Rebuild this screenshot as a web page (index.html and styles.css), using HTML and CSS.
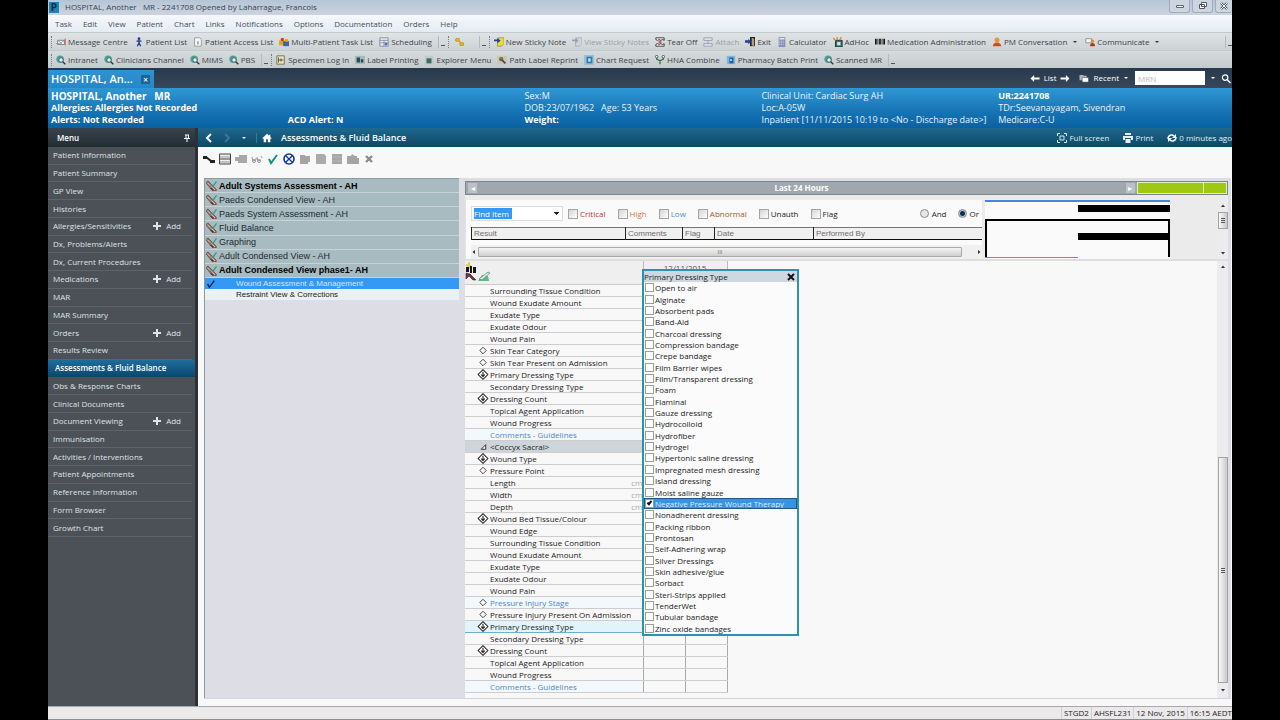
FILE: index.html
```html
<!DOCTYPE html>
<html lang="en">
<head>
<meta charset="utf-8">
<title>HOSPITAL, Another MR - 2241708</title>
<link rel="stylesheet" href="styles.css">
</head>
<body>
<svg class="sprite" aria-hidden="true">
  <symbol id="globe" viewBox="0 0 12 12"><circle cx="5" cy="5" r="4.5" fill="#4a9fae"/><path d="M2 3l3-2 1 2-2 3zM6 6l3-2v3z" fill="#4fa34e"/><circle cx="6" cy="6" r="2.6" fill="#e6f2f6" stroke="#40606c"/><path d="M8 8l3.2 3.2" stroke="#333" stroke-width="1.6"/></symbol>
  <symbol id="letter" viewBox="0 0 12 12"><path d="M2 4h8v5H2z" fill="#fff" stroke="#777"/><path d="M0 8h7M2 4l4 3 4-3" stroke="#888" fill="none"/><path d="M11 2v8" stroke="#c33"/></symbol>
  <symbol id="person" viewBox="0 0 12 12"><circle cx="6" cy="2" r="1.6" fill="#223a8c"/><path d="M6 3v4M3 5h6M6 7l-2 4M6 7l2 4" stroke="#223a8c" stroke-width="1.5"/></symbol>
  <symbol id="page" viewBox="0 0 12 12"><path d="M2 1h6l2 2v8H2z" fill="#f8f8fa" stroke="#8b8f96"/><path d="M6 5v4" stroke="#446" /></symbol>
  <symbol id="folk" viewBox="0 0 12 12"><path d="M0 4h7v6H0z" fill="#e8a020"/><circle cx="4" cy="3" r="2" fill="#d33a24"/><path d="M5 5h7v6H5z" fill="#3a66a8"/><circle cx="9" cy="4" r="2" fill="#e8a020"/></symbol>
  <symbol id="sched" viewBox="0 0 12 12"><path d="M1 1h10v10H1z" fill="#e8ecf4" stroke="#7a879c"/><path d="M1 4h10M1 7h10M6 4v7" stroke="#7a879c"/><path d="M7 7h3v3H7z" fill="#4a70b8"/></symbol>
  <symbol id="note" viewBox="0 0 12 12"><path d="M5 1h7v7l-3 3H4z" fill="#eedb3c" stroke="#8a7a20" stroke-width=".7"/><path d="M0 3h4V1l4 3.500-4 3V5H0z" fill="#233fa0"/></symbol>
  <symbol id="notegray" viewBox="0 0 12 12"><path d="M5 1h7v7l-3 3H4z" fill="#d0d3d6" stroke="#989da2" stroke-width=".7"/><path d="M0 3h4V1l4 3.500-4 3V5H0z" fill="#8fa3ba"/></symbol>
  <symbol id="tear" viewBox="0 0 12 12"><path d="M1 1h10v3L9 3 7 4 5 3 3 4 1 3zM1 11h10V8L9 9 7 8 5 9 3 8 1 9z" fill="#fff" stroke="#222"/><path d="M6 4v4M4 6h4" stroke="#c22"/></symbol>
  <symbol id="attach" viewBox="0 0 12 12"><path d="M1 1h10v3H1zM1 11h10V8H1zM6 4v4" fill="#e8eaf0" stroke="#8a94b0"/></symbol>
  <symbol id="exit" viewBox="0 0 12 12"><path d="M6 0h6v11H6z" fill="#222"/><path d="M8 1l3 1v9l-3-1z" fill="#b5a270"/><path d="M0 4h4V2l3 3.500L4 9V7H0z" fill="#253fa4"/></symbol>
  <symbol id="calc" viewBox="0 0 12 12"><path d="M2 0h8v12H2z" fill="#8790b4"/><path d="M3 1h6v2H3z" fill="#e0e8f0"/><path d="M3 5h6M3 7h6M3 9h6" stroke="#dfe2f0" stroke-dasharray="1 1"/></symbol>
  <symbol id="adhoc" viewBox="0 0 12 12"><path d="M3 4h8v8H3z" fill="#2f6f78" stroke="#222"/><path d="M5 6h4v4H5z" fill="#d8e8d8"/><path d="M0 1l3 3M5 0v4M10 0L8 4" stroke="#c8901c" stroke-width="1.500"/></symbol>
  <symbol id="barcode" viewBox="0 0 12 12"><path d="M0 2h2v7H0zM3 2h1v7H3zM5 2h2v7H5zM8 2h1v7H8zM10 2h2v7h-2z" fill="#111"/></symbol>
  <symbol id="agent" viewBox="0 0 12 12"><circle cx="6" cy="3.500" r="3" fill="#e39a32"/><path d="M1 11c0-6 10-6 10 0z" fill="#c94d22"/></symbol>
  <symbol id="comm" viewBox="0 0 12 12"><path d="M1 2h7v5H1z" fill="#f4f4f6" stroke="#888"/><circle cx="9" cy="5" r="2" fill="#d98d2e"/><path d="M6 11c0-5 6-5 6 0z" fill="#a33a1e"/></symbol>
  <symbol id="login" viewBox="0 0 12 12"><path d="M1 1h9v10H1z" fill="#ece4c4" stroke="#6e6542"/><path d="M3 3v6M3 6h6M6 4v4" stroke="#4a452e"/></symbol>
  <symbol id="label" viewBox="0 0 12 12"><path d="M0 1h12v10H0z" fill="#a7b9bc"/><path d="M2 3h4v6H2zM7 5h3v4H7z" fill="#244f58"/></symbol>
  <symbol id="explore" viewBox="0 0 12 12"><path d="M1 1h9l2 2v9H1z" fill="#c1cbc9"/><path d="M3 4h6v6H3z" fill="#3c6c62"/></symbol>
  <symbol id="path" viewBox="0 0 12 12"><path d="M0 1h12v10H0z" fill="#c8c6b6"/><circle cx="5" cy="5" r="2.500" fill="#7c6a30"/><path d="M6 6l4 4" stroke="#444" stroke-width="2"/></symbol>
  <symbol id="chart" viewBox="0 0 12 12"><path d="M0 0h12v12H0z" fill="#9cc0d6"/><path d="M3 2h7v8H3z" fill="#2a7db4"/><path d="M5 4h3v4H5z" fill="#bfe2f2"/></symbol>
  <symbol id="hna" viewBox="0 0 12 12"><path d="M2 1v4l4 2 4-2V1M6 7v4" fill="none" stroke="#446b55" stroke-width="1.600"/><circle cx="2" cy="2" r="1.500" fill="#fff" stroke="#444"/><circle cx="10" cy="2" r="1.500" fill="#fff" stroke="#444"/></symbol>
  <symbol id="pharm" viewBox="0 0 12 12"><path d="M1 1h10v10H1z" fill="#7fb4dc"/><path d="M4 3h5v7H4z" fill="#1c65a8"/><path d="M5 5h2v2H5z" fill="#fff"/></symbol>
  <symbol id="brush" viewBox="0 0 12 12"><path d="M0 3l2-2 4 4 5 5v2H8L4 8z" fill="#a0746a" stroke="#4a2c28" stroke-width=".7"/><path d="M1.500 3l3 3M6 7l4 4" stroke="#e3d3c8"/><path d="M5 9l3 2" stroke="#7d1f28" stroke-width="1.500"/><path d="M6 5l1.500 2L11.500 1.500" fill="none" stroke="#2f9c8a" stroke-width="1.400"/></symbol>
  <symbol id="dia" viewBox="0 0 12 12"><path d="M6 2.500L9.500 6 6 9.500 2.500 6z" fill="#fff" stroke="#333"/></symbol>
  <symbol id="diarrow" viewBox="0 0 12 12"><path d="M6 .7L11.300 6 6 11.300.7 6z" fill="#fff" stroke="#222" stroke-width="1.100"/><path d="M6 3v5M4 6l2 2.300L8 6" fill="none" stroke="#222" stroke-width="1.200"/></symbol>
  <symbol id="plus" viewBox="0 0 8 8"><path d="M3 0h2v3h3v2H5v3H3V5H0V3h3z" fill="#dfe3e6"/></symbol>
  <symbol id="left" viewBox="0 0 6 8"><path d="M4 2v4L1.500 4z" fill="#333"/></symbol>
  <symbol id="right" viewBox="0 0 6 8"><path d="M2 2v4l2.500-2z" fill="#333"/></symbol>
  <symbol id="up" viewBox="0 0 8 6"><path d="M2 4h4L4 1.500z" fill="#333"/></symbol>
  <symbol id="down" viewBox="0 0 8 6"><path d="M2 2h4L4 4.500z" fill="#333"/></symbol>
</svg>

<div class="app">
  <header class="titlebar">
    <span class="logo">P</span>
    <h1 class="title">HOSPITAL, Another &nbsp; MR - 2241708 Opened by Laharrague, Francois</h1>
    <div class="winbtns">
      <button aria-label="Minimise"><svg viewBox="0 0 12 8"><path d="M2.500 3.500h7v2h-7z" fill="#fff" stroke="#667"/></svg></button>
      <button aria-label="Restore"><svg viewBox="0 0 12 8"><path d="M4.500.5h5v4h-5zM2.500 2.500h5v4h-5z" fill="#fff" stroke="#556"/></svg></button>
      <button aria-label="Close"><svg viewBox="0 0 12 8"><path d="M3 1l6 6M9 1L3 7" stroke="#556" stroke-width="2.400"/><path d="M3 1l6 6M9 1L3 7" stroke="#fff"/></svg></button>
    </div>
  </header>

  <nav class="menubar">
    <button>Task</button><button>Edit</button><button>View</button><button>Patient</button><button>Chart</button><button>Links</button><button>Notifications</button><button>Options</button><button>Documentation</button><button>Orders</button><button>Help</button>
  </nav>

  <div class="toolbar">
    <div class="group">
      <button><svg><use href="#letter"/></svg>Message Centre</button>
      <button><svg><use href="#person"/></svg>Patient List</button>
      <button><svg><use href="#page"/></svg>Patient Access List</button>
      <button><svg><use href="#folk"/></svg>Multi-Patient Task List</button>
      <button><svg><use href="#sched"/></svg>Scheduling</button>
      <span class="more"></span>
    </div>
    <div class="group keys">
      <button aria-label="Link"><svg viewBox="0 0 12 12"><path d="M1 2h4v3H1zM6 7h4v3H6z" fill="#f0cb2e" stroke="#b38c12"/><path d="M4 4l4 4" stroke="#d8a81c" stroke-width="2"/></svg></button>
      <span class="more"></span>
    </div>
    <div class="group">
      <button><svg><use href="#note"/></svg>New Sticky Note</button>
      <button disabled><svg><use href="#notegray"/></svg>View Sticky Notes</button>
      <button><svg><use href="#tear"/></svg>Tear Off</button>
      <button disabled><svg><use href="#attach"/></svg>Attach</button>
      <button><svg><use href="#exit"/></svg>Exit</button>
      <button><svg><use href="#calc"/></svg>Calculator</button>
      <button><svg><use href="#adhoc"/></svg>AdHoc</button>
      <button><svg><use href="#barcode"/></svg>Medication Administration</button>
      <button class="drop"><svg><use href="#agent"/></svg>PM Conversation</button>
      <button class="drop"><svg><use href="#comm"/></svg>Communicate</button>
    </div>
    <span class="more end"></span>
  </div>
  <div class="toolbar second">
    <div class="group">
      <button><svg><use href="#globe"/></svg>Intranet</button>
      <button><svg><use href="#globe"/></svg>Clinicians Channel</button>
      <button><svg><use href="#globe"/></svg>MIMS</button>
      <button><svg><use href="#globe"/></svg>PBS</button>
      <span class="more"></span>
    </div>
    <div class="group">
      <button><svg><use href="#login"/></svg>Specimen Log In</button>
      <button><svg><use href="#label"/></svg>Label Printing</button>
      <button><svg><use href="#explore"/></svg>Explorer Menu</button>
      <button><svg><use href="#path"/></svg>Path Label Reprint</button>
      <button><svg><use href="#chart"/></svg>Chart Request</button>
      <button><svg><use href="#hna"/></svg>HNA Combine</button>
      <button><svg><use href="#pharm"/></svg>Pharmacy Batch Print</button>
      <button><svg><use href="#globe"/></svg>Scanned MR</button>
      <span class="more"></span>
    </div>
  </div>

  <div class="tabstrip">
    <div class="tab">HOSPITAL, An...<button aria-label="Close tab">×</button></div>
    <div class="finder">
      <button><svg viewBox="0 0 12 10"><path d="M1 5l4-4v3h6v2H5v3z" fill="#fff"/></svg>List<svg viewBox="0 0 12 10"><path d="M11 5L7 1v3H1v2h6v3z" fill="#fff"/></svg></button>
      <button class="recent"><svg viewBox="0 0 12 10"><path d="M1 1h4l1 1h3v5H1z" fill="#aab4c0"/><path d="M4 4h7v5H4z" fill="#fff" stroke="#445" stroke-width=".6"/></svg>Recent<i class="caret"></i></button>
      <input type="text" placeholder="MRN" aria-label="MRN">
      <button class="search" aria-label="Search"><i class="caret"></i><svg viewBox="0 0 12 10"><circle cx="5" cy="4" r="3" fill="none" stroke="#fff" stroke-width="1.300"/><path d="M7 6l4 4" stroke="#fff" stroke-width="1.500"/></svg></button>
    </div>
  </div>

  <section class="banner">
    <div><b class="name">HOSPITAL, Another &nbsp; MR</b><b>Allergies: Allergies Not Recorded</b><b>Alerts: Not Recorded</b></div>
    <div><b class="last">ACD Alert: N</b></div>
    <div><span>Sex:M</span><span>DOB:23/07/1962 &nbsp; Age: 53 Years</span><b>Weight:</b></div>
    <div><span>Clinical Unit: Cardiac Surg AH</span><span>Loc:A-05W</span><span>Inpatient [11/11/2015 10:19 to &lt;No - Discharge date&gt;]</span></div>
    <div><b>UR:2241708</b><span>TDr:Seevanayagam, Sivendran</span><span>Medicare:C-U</span></div>
  </section>

  <div class="body">
    <aside class="side">
      <h2>Menu<svg viewBox="0 0 8 8"><path d="M2 1h4M3 1v3M5.500 1v3M1 4.500h6M4 5v3" stroke="#fff" fill="none"/></svg></h2>
      <ul>
        <li><a href="#">Patient Information</a></li>
        <li><a href="#">Patient Summary</a></li>
        <li><a href="#">GP View</a></li>
        <li><a href="#">Histories</a></li>
        <li><a href="#">Allergies/Sensitivities</a><button><svg><use href="#plus"/></svg>Add</button></li>
        <li><a href="#">Dx, Problems/Alerts</a></li>
        <li><a href="#">Dx, Current Procedures</a></li>
        <li><a href="#">Medications</a><button><svg><use href="#plus"/></svg>Add</button></li>
        <li><a href="#">MAR</a></li>
        <li><a href="#">MAR Summary</a></li>
        <li><a href="#">Orders</a><button><svg><use href="#plus"/></svg>Add</button></li>
        <li><a href="#">Results Review</a></li>
        <li class="current"><a href="#">Assessments &amp; Fluid Balance</a></li>
        <li><a href="#">Obs &amp; Response Charts</a></li>
        <li><a href="#">Clinical Documents</a></li>
        <li><a href="#">Document Viewing</a><button><svg><use href="#plus"/></svg>Add</button></li>
        <li><a href="#">Immunisation</a></li>
        <li><a href="#">Activities / Interventions</a></li>
        <li><a href="#">Patient Appointments</a></li>
        <li><a href="#">Reference Information</a></li>
        <li><a href="#">Form Browser</a></li>
        <li><a href="#">Growth Chart</a></li>
      </ul>
    </aside>

    <main class="main">
      <div class="crumb">
        <button aria-label="Back"><svg viewBox="0 0 10 10"><path d="M7 1L3 5l4 4" fill="none" stroke="#fff" stroke-width="2"/></svg></button>
        <button aria-label="Forward"><svg viewBox="0 0 10 10"><path d="M3 1l4 4-4 4" fill="none" stroke="#3f7591" stroke-width="2"/></svg></button>
        <button aria-label="History"><i class="caret"></i></button>
        <button class="home" aria-label="Home"><svg viewBox="0 0 12 12"><path d="M6 1L0 6.500h2V11h3V7.500h2V11h3V6.500h2L10 4.700V2H8.500v1.300z" fill="#fff"/></svg></button>
        <h2>Assessments &amp; Fluid Balance</h2>
        <div class="tools">
          <button><svg viewBox="0 0 10 10"><path d="M.5 3V.5H3M7 .5h2.500V3M9.500 7v2.500H7M3 9.500H.5V7M3 3h4v4H3z" fill="none" stroke="#d9e8ef"/></svg>Full screen</button>
          <button><svg viewBox="0 0 10 10"><path d="M2 0h6v2H2zM0 3h10v4H8V5H2v2H0zM2.500 6h5v4h-5z" fill="#e8eff4"/></svg>Print</button>
          <button><svg viewBox="0 0 10 10"><path d="M1 6c0-4 4-5 6-3M9 4c0 4-4 5-6 3" fill="none" stroke="#fff" stroke-width="1.500"/><path d="M9 1v4H5zM1 9V5h4z" fill="#fff"/></svg>0 minutes ago</button>
        </div>
      </div>

      <div class="icons">
        <button aria-label="Tree"><svg viewBox="0 0 12 12"><path d="M0 3h4v3H0zM7 7h5v3H7z" fill="#222"/><path d="M3 4l5 4" stroke="#222" stroke-width="2"/></svg></button>
        <button aria-label="Split"><svg viewBox="0 0 12 12"><path d="M.5 1h11v10H.5zM.5 6h11" fill="#eee" stroke="#444"/><path d="M1 4h10M1 9h10" stroke="#999"/></svg></button>
        <button aria-label="Export"><svg viewBox="0 0 12 12"><path d="M0 4h4V2h8v8H3V8H0z" fill="#a8a8a8"/></svg></button>
        <button aria-label="View"><svg viewBox="0 0 12 12"><path d="M1 4l1 4 3-1M6 4l1 4 3-1M4 6h2M10 3l1 2" fill="none" stroke="#999"/><circle cx="3" cy="8" r="1.500" fill="none" stroke="#999"/><circle cx="8" cy="8" r="1.500" fill="none" stroke="#999"/></svg></button>
        <button aria-label="Sign"><svg viewBox="0 0 12 12"><path d="M2 6l2 4 6-8" fill="none" stroke="#16917d" stroke-width="2"/></svg></button>
        <button aria-label="Cancel"><svg viewBox="0 0 12 12"><circle cx="6" cy="6" r="5" fill="#fff" stroke="#1433a0" stroke-width="1.600"/><path d="M2.500 2.500l7 7M9.500 2.500l-7 7" stroke="#1433a0" stroke-width="1.400"/></svg></button>
        <button aria-label="Flag"><svg viewBox="0 0 12 12"><path d="M1 2h5v1h5v6H9v2H1z" fill="#a4a4a4"/></svg></button>
        <button aria-label="Copy"><svg viewBox="0 0 12 12"><path d="M1 1h8l2 2v8H1z" fill="#aaa"/></svg></button>
        <button aria-label="Grid"><svg viewBox="0 0 12 12"><path d="M1 1h10v10H1z" fill="#a6a6a6"/><path d="M1 4h10M1 8h10" stroke="#b8b8b8"/></svg></button>
        <button aria-label="Open"><svg viewBox="0 0 12 12"><path d="M0 3h4l1-2 3 2h2v2h2v6H0z" fill="#a4a4a4"/></svg></button>
        <button aria-label="Delete"><svg viewBox="0 0 12 12"><path d="M3 3l6 6M9 3L3 9" stroke="#8c8c8c" stroke-width="2.400"/></svg></button>
      </div>

      <div class="work">
        <div class="views">
          <ul class="viewlist">
            <li class="strong"><svg><use href="#brush"/></svg>Adult Systems Assessment - AH</li>
            <li><svg><use href="#brush"/></svg>Paeds Condensed View - AH</li>
            <li><svg><use href="#brush"/></svg>Paeds System Assessment - AH</li>
            <li><svg><use href="#brush"/></svg>Fluid Balance</li>
            <li><svg><use href="#brush"/></svg>Graphing</li>
            <li><svg><use href="#brush"/></svg>Adult Condensed View - AH</li>
            <li class="strong"><svg><use href="#brush"/></svg>Adult Condensed View phase1- AH</li>
          </ul>
          <ul class="sublist">
            <li class="chosen"><svg viewBox="0 0 12 12"><path d="M2 6l2 4 6-8" fill="none" stroke="#0b1b45" stroke-width="1.600"/></svg>Wound Assessment &amp; Management</li>
            <li><svg></svg>Restraint View &amp; Corrections</li>
          </ul>
        </div>

        <div class="panel">
          <div class="timebar">
            <div class="range"><button aria-label="Earlier">◂</button><b>Last 24 Hours</b><button aria-label="Later">▸</button></div>
            <div class="green"><i></i><i></i></div>
          </div>
          <div class="query">
            <div class="criteria">
              <form class="filters">
                <select aria-label="Find Item"><option>Find Item</option></select>
                <label class="critical"><input type="checkbox">Critical</label>
                <label class="high"><input type="checkbox">High</label>
                <label class="low"><input type="checkbox">Low</label>
                <label class="abnormal"><input type="checkbox">Abnormal</label>
                <label class="unauth"><input type="checkbox">Unauth</label>
                <label><input type="checkbox">Flag</label>
                <span class="logic"><label><input type="radio" name="op">And</label><label><input type="radio" name="op" checked>Or</label></span>
              </form>
              <table class="results">
                <colgroup><col class="c-result"><col class="c-comments"><col class="c-flag"><col class="c-date"><col></colgroup>
                <tr><th>Result</th><th>Comments</th><th>Flag</th><th>Date</th><th>Performed By</th></tr>
              </table>
              <div class="hscroll"><svg><use href="#left"/></svg><span>III</span><svg><use href="#right"/></svg></div>
            </div>
            <div class="overview"><i class="blue"></i><i class="bar"></i><div class="frame"><i class="bar"></i></div><i class="violet"></i></div>
            <div class="vscroll"><svg><use href="#up"/></svg><span class="short"></span><i class="fill"></i><svg><use href="#down"/></svg></div>
          </div>

          <div class="sheet">
            <table class="flow">
              <colgroup><col class="c-item"><col class="c-slot"><col class="c-slot"></colgroup>
              <thead><tr><td><svg class="corner" viewBox="0 0 26 20"><path d="M4 0v7M1 3l6 2" stroke="#d9cf46" stroke-width="2"/><path d="M1 5h3v5H1zM5 4h2v7H5zM8 5h3v6H8z" fill="#181818"/><path d="M1 11l4 1 6 6H8l-4-4-3 3z" fill="#7c2f38" stroke="#222" stroke-width=".6"/><path d="M13 19h11l-1-5-6-1z" fill="#5ebc86"/><path d="M14 17l9-7 2 1-8 7z" fill="#dfe8ea" stroke="#4a8575" stroke-width=".7"/></svg></td><th colspan="2">12/11/2015</th></tr></thead>
              <tbody>
                <tr><td>Surrounding Tissue Condition</td><td></td><td></td></tr>
                <tr><td>Wound Exudate Amount</td><td></td><td></td></tr>
                <tr><td>Exudate Type</td><td></td><td></td></tr>
                <tr><td>Exudate Odour</td><td></td><td></td></tr>
                <tr><td>Wound Pain</td><td></td><td></td></tr>
                <tr><td><svg><use href="#dia"/></svg>Skin Tear Category</td><td></td><td></td></tr>
                <tr><td><svg><use href="#dia"/></svg>Skin Tear Present on Admission</td><td></td><td></td></tr>
                <tr><td><svg><use href="#diarrow"/></svg>Primary Dressing Type</td><td></td><td></td></tr>
                <tr><td>Secondary Dressing Type</td><td></td><td></td></tr>
                <tr><td><svg><use href="#diarrow"/></svg>Dressing Count</td><td></td><td></td></tr>
                <tr><td>Topical Agent Application</td><td></td><td></td></tr>
                <tr><td>Wound Progress</td><td></td><td></td></tr>
                <tr class="link"><td>Comments - Guidelines</td><td></td><td></td></tr>
                <tr class="section"><td><svg viewBox="0 0 12 12"><path d="M9 4v5H4z" fill="#fff" stroke="#222"/></svg>&lt;Coccyx Sacral&gt;</td><td></td><td></td></tr>
                <tr><td><svg><use href="#diarrow"/></svg>Wound Type</td><td></td><td></td></tr>
                <tr><td><svg><use href="#dia"/></svg>Pressure Point</td><td></td><td></td></tr>
                <tr><td>Length<small>cm</small></td><td></td><td></td></tr>
                <tr><td>Width<small>cm</small></td><td></td><td></td></tr>
                <tr><td>Depth<small>cm</small></td><td></td><td></td></tr>
                <tr><td><svg><use href="#diarrow"/></svg>Wound Bed Tissue/Colour</td><td></td><td></td></tr>
                <tr><td>Wound Edge</td><td></td><td></td></tr>
                <tr><td>Surrounding Tissue Condition</td><td></td><td></td></tr>
                <tr><td>Wound Exudate Amount</td><td></td><td></td></tr>
                <tr><td>Exudate Type</td><td></td><td></td></tr>
                <tr><td>Exudate Odour</td><td></td><td></td></tr>
                <tr><td>Wound Pain</td><td></td><td></td></tr>
                <tr class="link"><td><svg><use href="#dia"/></svg>Pressure Injury Stage</td><td></td><td></td></tr>
                <tr><td><svg><use href="#dia"/></svg>Pressure Injury Present On Admission</td><td></td><td></td></tr>
                <tr class="active"><td><svg><use href="#diarrow"/></svg>Primary Dressing Type</td><td></td><td></td></tr>
                <tr><td>Secondary Dressing Type</td><td></td><td></td></tr>
                <tr><td><svg><use href="#diarrow"/></svg>Dressing Count</td><td></td><td></td></tr>
                <tr><td>Topical Agent Application</td><td></td><td></td></tr>
                <tr><td>Wound Progress</td><td></td><td></td></tr>
                <tr class="link"><td>Comments - Guidelines</td><td></td><td></td></tr>
              </tbody>
            </table>
            <fieldset class="popup">
              <div class="head"><span>Primary Dressing Type</span><button type="button" aria-label="Close"><svg viewBox="0 0 8 8"><path d="M1 1l6 6M7 1L1 7" stroke="#111" stroke-width="2"/></svg></button></div>
              <div class="choices">
                <label><input type="checkbox">Open to air</label>
                <label><input type="checkbox">Alginate</label>
                <label><input type="checkbox">Absorbent pads</label>
                <label><input type="checkbox">Band-Aid</label>
                <label><input type="checkbox">Charcoal dressing</label>
                <label><input type="checkbox">Compression bandage</label>
                <label><input type="checkbox">Crepe bandage</label>
                <label><input type="checkbox">Film Barrier wipes</label>
                <label><input type="checkbox">Film/Transparent dressing</label>
                <label><input type="checkbox">Foam</label>
                <label><input type="checkbox">Flaminal</label>
                <label><input type="checkbox">Gauze dressing</label>
                <label><input type="checkbox">Hydrocolloid</label>
                <label><input type="checkbox">Hydrofiber</label>
                <label><input type="checkbox">Hydrogel</label>
                <label><input type="checkbox">Hypertonic saline dressing</label>
                <label><input type="checkbox">Impregnated mesh dressing</label>
                <label><input type="checkbox">Island dressing</label>
                <label><input type="checkbox">Moist saline gauze</label>
                <label class="picked"><input type="checkbox" checked>Negative Pressure Wound Therapy</label>
                <label><input type="checkbox">Nonadherent dressing</label>
                <label><input type="checkbox">Packing ribbon</label>
                <label><input type="checkbox">Prontosan</label>
                <label><input type="checkbox">Self-Adhering wrap</label>
                <label><input type="checkbox">Silver Dressings</label>
                <label><input type="checkbox">Skin adhesive/glue</label>
                <label><input type="checkbox">Sorbact</label>
                <label><input type="checkbox">Steri-Strips applied</label>
                <label><input type="checkbox">TenderWet</label>
                <label><input type="checkbox">Tubular bandage</label>
                <label><input type="checkbox">Zinc oxide bandages</label>
              </div>
            </fieldset>
            <div class="vscroll tall"><svg><use href="#up"/></svg><i class="fill"></i><span class="long"></span><svg><use href="#down"/></svg></div>
          </div>
        </div>
      </div>
    </main>
  </div>

  <footer class="status"><span class="blank"></span><span>STGD2</span><span>AHSFL231</span><span>12 Nov, 2015</span><span>16:15 AEDT</span></footer>
</div>
</body>
</html>
```
FILE: styles.css
```css
* { box-sizing: border-box; }
html, body { height: 100%; }
body { margin: 0; padding: 0 48px; background: #000; color: #222; font: 8px/12px "Open Sans", "Noto Sans", sans-serif; overflow: hidden; }
button { display: inline-flex; align-items: center; margin: 0; padding: 0; border: 0; background: none; color: inherit; font: inherit; white-space: nowrap; }
input, select { margin: 0; font: inherit; }
ul { margin: 0; padding: 0; list-style: none; }
h1, h2 { margin: 0; font: inherit; }
table { border-collapse: collapse; table-layout: fixed; }
th, td { padding: 0; font-weight: 400; text-align: left; white-space: nowrap; }
a { color: inherit; text-decoration: none; }
svg { display: block; flex: none; overflow: visible; }
i { display: block; }
.sprite { position: absolute; width: 0; height: 0; }
.caret { width: 0; height: 0; margin: 0 2px; border: 2px solid transparent; border-top-color: currentColor; border-bottom: 0; }

.app { display: flex; flex-direction: column; min-height: 100%; overflow: hidden; background: #f9f8f9; }

.titlebar { display: flex; align-items: center; height: 15px; padding: 0 0 1px 1px; gap: 6px; background: linear-gradient(#b6c5d6, #ccd3de); color: #384350; }
.logo { width: 10px; height: 11px; background: #1c86bc; color: #05283f; font-weight: 700; font-size: 10px; line-height: 11px; text-align: center; }
.title { flex: 1; }
.winbtns { display: flex; gap: 2px; align-self: flex-start; }
.winbtns button { width: 21px; height: 13px; justify-content: center; border: 1px solid #a0acba; border-top: 0; border-radius: 0 0 3px 3px; background: #ccd5e0; }
.winbtns button:last-child { width: 17px; border-right: 0; }
.winbtns svg { width: 12px; height: 8px; }

.menubar { display: flex; gap: 11px; height: 17px; padding-left: 7px; background: linear-gradient(#f6f8fb, #e4ecf3); color: #4a4f56; }

.toolbar { display: flex; align-items: center; height: 18px; padding-left: 3px; gap: 3px; background: linear-gradient(#dfe3e5, #cdd2d5); border-top: 1px solid #c4c9cd; color: #3c4249; }
.toolbar.second { background: linear-gradient(#d6dbdc, #c4cbcd); }
.group { display: flex; align-items: center; gap: 6px; padding-left: 4px; border-left: 1px dotted #777e85; }
.group button { gap: 2px; }
.group svg { width: 10px; height: 10px; }
.group button:disabled { color: #9ba0a5; }
.keys { gap: 14px; padding-left: 6px; }
.drop::after { content: ""; margin: 0 2px 0 4px; border: 2px solid transparent; border-top-color: #333; border-bottom: 0; }
.more { width: 7px; height: 12px; border-left: 1px solid #b5babf; background: linear-gradient(#555, #555) 2px 9px / 4px 1px no-repeat; }
.more.end { margin-left: auto; }

.tabstrip { display: flex; justify-content: space-between; align-items: stretch; height: 20px; background: linear-gradient(#28394d, #38475a); color: #fff; }
.tab { display: flex; align-items: center; justify-content: space-between; width: 106px; margin-top: 2px; padding: 0 4px 0 3px; background: linear-gradient(#2f93d2, #2487c8); font-size: 11px; font-weight: 600; white-space: nowrap; }
.tab button { width: 9px; height: 9px; justify-content: center; background: #1c6397; font-size: 9px; line-height: 9px; }
.finder { display: flex; align-items: center; }
.finder button { gap: 3px; }
.finder svg { width: 12px; height: 9px; }
.recent { margin: 0 5px 0 7px; }
.finder input { width: 70px; height: 14px; padding: 0 3px; border: 0; background: #fff; }
.finder input::placeholder { color: #bcb8b8; }
.search { margin-left: 4px; }

.banner { display: grid; grid-template-columns: repeat(5, 1fr); height: 40px; padding-top: 2px; background: linear-gradient(#2f97d4, #1673b4 60%, #0a61a2); color: #e6f3fb; }
.banner > div { display: grid; grid-auto-rows: 12px; padding-left: 3px; font-size: 9px; line-height: 12px; white-space: nowrap; }
.banner b { color: #fff; }
.banner .name { font-size: 10px; }
.banner .last { grid-row: 3; }

.body { display: flex; flex: 1; }
.side { display: flex; flex-direction: column; width: 150px; background: #4b5156; border-right: 3px solid #2d3136; color: #dfe3e6; }
.side h2 { display: flex; align-items: center; justify-content: space-between; height: 19px; padding: 0 4px 0 9px; background: linear-gradient(#3a444e, #222c35); color: #fff; font-weight: 600; }
.side h2 svg { width: 8px; height: 8px; }
.side ul { display: grid; grid-auto-rows: 1fr; height: 390px; }
.side li { display: flex; align-items: center; justify-content: space-between; margin-right: 3px; padding: 0 11px 0 5px; border-bottom: 1px solid #5e6469; }
.side button { gap: 5px; }
.side li svg { width: 8px; height: 8px; }
.side .current { margin-right: 0; padding-left: 7px; border-color: #0e4668; background: linear-gradient(#1f6c9c, #0b4a70); color: #fff; font-weight: 600; }

.main { display: flex; flex-direction: column; flex: 1; min-width: 0; }
.crumb { display: flex; align-items: center; height: 19px; padding-left: 6px; gap: 8px; background: linear-gradient(#1e688e, #0b4866); color: #fff; }
.crumb h2 { flex: 1; font-size: 9px; font-weight: 600; white-space: nowrap; }
.crumb svg { width: 10px; height: 10px; }
.crumb .home svg { width: 12px; }
.crumb .home { padding-left: 4px; border-left: 1px solid #3b7796; }
.tools { display: flex; gap: 14px; color: #e1edf3; }
.tools button { gap: 2px; }

.icons { display: flex; align-items: center; gap: 4px; height: 31px; padding: 0 5px 8px; }
.icons svg { width: 12px; height: 12px; }

.work { display: flex; flex: 1; margin: 0 1px 7px 6px; background: #dddde5; border-bottom: 1px solid #d4d4da; }
.views { width: 255px; margin-right: 6px; border-left: 1px solid #8f979d; color: #1d2a30; font-family: "Liberation Sans", sans-serif; }
.viewlist { display: grid; grid-auto-rows: 1fr; height: 100px; background: #a8bbc1; border-top: 1px solid #8b9ba1; font-size: 9px; }
.viewlist li { display: flex; align-items: center; gap: 2px; padding-left: 1px; border-bottom: 1px solid #c5d2d6; }
.viewlist svg { width: 11px; height: 11px; }
.viewlist .strong { color: #000; font-weight: 700; }
.sublist li { display: flex; align-items: center; gap: 20px; height: 11px; padding-left: 1px; background: #e8f1f3; color: #222; }
.sublist svg { width: 10px; height: 10px; }
.sublist .chosen { background: #3399f5; color: #cfe7fd; }

.panel { display: flex; flex-direction: column; flex: 1; min-width: 0; padding-right: 3px; }
.timebar { display: flex; margin-top: 3px; height: 14px; border: 1px solid #81858b; background: #a0a7ae; color: #fff; }
.range { display: flex; align-items: center; justify-content: space-between; flex: 1; padding: 0 2px; }
.range button { width: 9px; height: 10px; justify-content: center; background: #bcc1c6; }
.green { display: grid; grid-template-columns: 3fr 1fr; gap: 1px; width: 90px; padding: 1px; background: #e4efc0; }
.green i { background: #9fc813; }

.query { display: flex; height: 66px; padding-top: 5px; background: #ebebec; border-bottom: 2px solid #dedee1; }
.criteria { display: flex; flex-direction: column; width: 517px; padding-left: 5px; background: #fafafa; border-left: 1px solid #e3e3e3; }
.filters { display: flex; align-items: center; height: 27px; }
.filters select { width: 92px; height: 15px; margin-right: 5px; padding: 0 2px; border: 1px solid #dcdcdc; border-radius: 0; appearance: none; color: #fff; background: linear-gradient(#3399f5, #3399f5) 2px 1px / 38px 11px no-repeat, linear-gradient(#222, #222) 82px 5px / 5px 1px no-repeat, linear-gradient(#222, #222) 83px 6px / 3px 1px no-repeat, linear-gradient(#222, #222) 84px 7px / 1px 1px no-repeat, #fff; }
.filters option { color: #222; }
.filters label { display: flex; align-items: center; gap: 2px; margin-right: 12px; }
.filters input[type="checkbox"] { width: 10px; height: 10px; appearance: none; border: 1px solid #a4a4a4; background: linear-gradient(135deg, #d4d4d4, #fff); }
.filters .critical { color: #b8312c; }
.filters .high { color: #d2773c; }
.filters .low { color: #4d8fcc; }
.filters .abnormal { color: #a8541e; }
.logic { display: flex; margin-left: auto; }
.filters .logic label { margin: 0 3px 0 8px; gap: 3px; }
.filters input[type="radio"] { width: 9px; height: 9px; appearance: none; border: 1px solid #8c8c8c; border-radius: 50%; background: #e6e6e6; }
.filters input[type="radio"]:checked { background: radial-gradient(#10314c 2px, #a9cde6 3px); }
.results { width: 100%; border-bottom: 1px solid #111; border-top: 1px solid #777; color: #6d6d6d; font-family: "Liberation Sans", sans-serif; }
.results th { height: 11px; padding-left: 2px; border-left: 1px solid #222; background: #f0f0f0; line-height: 11px; }
.c-result { width: 154px; } .c-comments { width: 57px; } .c-flag { width: 32px; } .c-date { width: 99px; }
.hscroll { display: flex; align-items: center; gap: 1px; margin-top: auto; height: 14px; background: #f0f0f0; }
.hscroll svg { width: 6px; height: 8px; }
.hscroll span { flex: 1; height: 10px; margin-right: 13px; border: 1px solid #a9a9a9; border-radius: 1px; background: linear-gradient(#f4f4f4, #cfcfcf); color: #666; font-size: 6px; line-height: 8px; text-align: center; }
.overview { display: flex; flex-direction: column; width: 185px; margin-left: 3px; background: #fafafa; }
.overview .blue { height: 2px; margin-bottom: 3px; background: #4388dc; }
.bar { width: 50%; height: 7px; margin-left: auto; background: #000; }
.frame { flex: 1; margin-top: 7px; padding-top: 12px; border: 2px solid #000; border-bottom: 0; }
.violet { width: 50%; height: 1px; margin-bottom: 1px; background: #9a76c8; }
.vscroll { display: flex; flex-direction: column; align-items: center; width: 11px; margin-left: auto; padding: 3px 0; background: #ececee; }
.vscroll svg { width: 8px; height: 6px; }
.vscroll span { width: 10px; border: 1px solid #a2a2a2; background: repeating-linear-gradient(#555 0 1px, transparent 1px 2px) center / 4px 5px no-repeat, linear-gradient(90deg, #f8f8f8, #c9c9c9); }
.vscroll .fill { flex: 1; }
.short { height: 17px; margin-top: 3px; }
.long { height: 226px; margin-bottom: 4px; }
.tall { padding-bottom: 5px; }

.sheet { position: relative; display: flex; flex: 1; align-items: stretch; background: #f9f8f9; }
.flow { align-self: flex-start; width: 262px; margin-bottom: 4px; }
.c-item { width: 178px; } .c-slot { width: 42px; }
.flow thead tr { height: 23px; background: #efeff0; }
.flow thead td { border-bottom: 1px solid #ccc; }
.flow thead th { padding-top: 2px; border: solid #bbb; border-width: 0 1px; vertical-align: top; color: #555; text-align: center; line-height: 10px; }
.corner { width: 26px; height: 20px; }
.flow tbody tr { height: 12px; }
.flow tbody td { height: 12px; border-bottom: 1px solid #cdcdd0; border-right: 1px solid #a9a9ac; line-height: 11px; }
.flow tbody td:first-child { padding-left: 25px; color: #222; }
.flow tbody svg { float: left; width: 12px; height: 11px; margin-left: -13px; }
.flow small { float: right; color: #aaa; font-size: 8px; }
.flow tbody .link td:first-child { color: #5187c2; background: #f3f8fc; }
.flow .section td { background: #cdd4da; }
.flow .active td { background: #e2f3fb; border-bottom-color: #6bafc8; border-top: 1px solid #6bafc8; }

.popup { position: absolute; left: 177px; top: 8px; width: 157px; margin: 0; padding: 0; border: 2px solid #2b94ac; background: #fbfbfb; color: #222; }
.popup .head { display: flex; align-items: center; justify-content: space-between; height: 11px; padding-right: 2px; background: #cfd8e0; }
.popup .head svg { width: 8px; height: 8px; }
.choices { display: grid; grid-auto-rows: 1fr; height: 352px; }
.choices label { display: flex; align-items: center; gap: 1px; padding-left: 1px; line-height: 11px; }
.choices input { width: 9px; height: 9px; appearance: none; border: 1px solid #9aa093; background: #fff; }
.choices .picked { background: #3a92e2; color: #dcecfb; outline: 1px solid #21588c; outline-offset: -1px; }
.choices input:checked::after { content: ""; display: block; box-sizing: content-box; width: 1px; height: 3px; margin-left: 2px; border: solid #111; border-width: 0 2px 2px 0; transform: rotate(40deg); }

.status { display: flex; align-items: center; height: 14px; background: #ece9ea; border-top: 1px solid #a8a8ac; border-bottom: 1px solid #8c8c90; white-space: nowrap; }
.status span { padding: 0 2px; border-left: 1px solid #d3cfd2; }
.status .blank { flex: 1; border: 0; }
.status span:last-child { padding-right: 0; }
```
